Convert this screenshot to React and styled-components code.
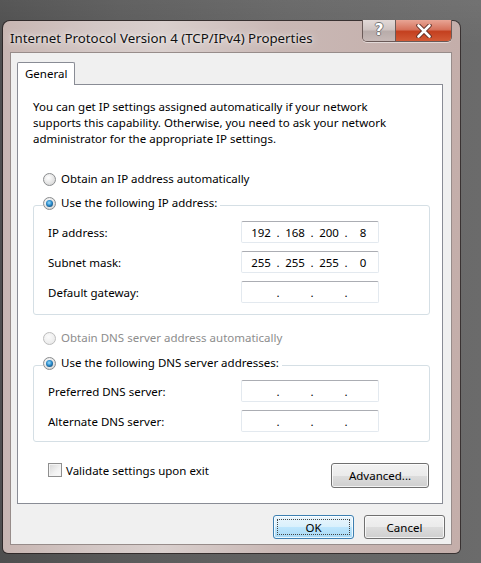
import styled, { createGlobalStyle } from "styled-components";

const GlobalStyle = createGlobalStyle`
  html, body {
    margin: 0;
    padding: 0;
  }
  body {
    width: 481px;
    height: 563px;
    overflow: hidden;
    background:
      linear-gradient(180deg, rgba(255,255,255,0.05) 0%, rgba(0,0,0,0) 8%),
      linear-gradient(90deg, #4e4e4e 0%, #5a5a5a 25%, #646464 60%, #6b6b6b 100%);
    font-family: "Noto Sans", "Open Sans", sans-serif;
    font-size: 11.5px;
    color: #000;
  }
`;

const Page = styled.div`
  display: flex;
  padding: 21px 0 0 3px;
`;

const Window = styled.div`
  box-sizing: border-box;
  width: 457px;
  height: 532px;
  display: flex;
  flex-direction: column;
  border-radius: 7px 7px 5px 5px;
  background: linear-gradient(90deg, #c8b6b2 0%, #d3c7c5 20%, #d9cfcd 35%, #c9b8b5 60%, #c4aeaa 100%);
  box-shadow: 0 0 0 1px rgba(30, 20, 20, 0.65);
`;

const TitleBar = styled.div`
  display: flex;
  align-items: flex-start;
  height: 31px;
  padding: 0 7px 0 7px;
`;

const Title = styled.div`
  flex: 1;
  padding-top: 8px;
  font-size: 13.3px;
  line-height: 18px;
  white-space: nowrap;
  color: #111;
  text-shadow: 0 0 8px rgba(255, 255, 255, 0.9), 0 0 3px rgba(255, 255, 255, 0.8);
`;

const CaptionButtons = styled.div`
  display: flex;
  margin-top: -1px;
  margin-right: 1px;
  border: 1px solid #6a5a58;
  border-top: none;
  border-radius: 0 0 5px 5px;
  overflow: hidden;
  box-shadow: 0 1px 0 rgba(255, 255, 255, 0.5);
`;

const CaptionButton = styled.div`
  display: flex;
  align-items: center;
  justify-content: center;
  height: 21px;
  width: ${(p) => p.$w}px;
  background: ${(p) =>
    p.$close
      ? "linear-gradient(180deg, #e8a595 0%, #d6735d 45%, #c4401f 55%, #d25a36 100%)"
      : "linear-gradient(180deg, #e2d9d7 0%, #cfc4c2 45%, #b8acaa 55%, #c6b9b7 100%)"};
  & + & {
    border-left: 1px solid #6a5a58;
  }
`;

const HelpGlyph = styled.span`
  font-family: "DejaVu Sans", sans-serif;
  font-weight: bold;
  font-size: 15px;
  line-height: 15px;
  color: #fff;
  text-shadow: 1px 0 0 #777, -1px 0 0 #777, 0 1px 0 #777, 0 -1px 0 #777;
`;

const Client = styled.div`
  box-sizing: border-box;
  flex: 1;
  display: flex;
  flex-direction: column;
  margin: 0 8px 8px 7px;
  padding: 9px 0 0 6px;
  background: #f0f0f0;
  border: 1px solid #978c8a;
`;

const TabStrip = styled.div`
  display: flex;
`;

const Tab = styled.div`
  box-sizing: border-box;
  height: 23px;
  padding: 0 7px;
  line-height: 21px;
  background: #fff;
  border: 1px solid #898c95;
  border-bottom: none;
  border-radius: 2px 2px 0 0;
  margin-bottom: -1px;
  position: relative;
  z-index: 1;
`;

const Panel = styled.div`
  box-sizing: border-box;
  width: 426px;
  height: 420px;
  background: #fff;
  border: 1px solid #898c95;
  display: flex;
  flex-direction: column;
`;

const Intro = styled.p`
  margin: 14px 0 0 15px;
  line-height: 16px;
  white-space: nowrap;
`;

const RadioRow = styled.label`
  display: flex;
  align-items: center;
  gap: 5px;
  height: 16px;
  line-height: 16px;
  margin: ${(p) => p.$m || "0"};
  color: ${(p) => (p.$disabled ? "#8d8d8d" : "#000")};
  white-space: nowrap;
`;

const Radio = styled.span`
  box-sizing: border-box;
  position: relative;
  width: 13px;
  height: 13px;
  border-radius: 50%;
  border: 1px solid ${(p) => (p.$disabled ? "#bcbcbc" : "#8a8c8e")};
  background: ${(p) =>
    p.$disabled
      ? "radial-gradient(circle at 40% 35%, #fbfbfb 0%, #ececec 70%, #e2e2e2 100%)"
      : "radial-gradient(circle at 40% 35%, #ffffff 0%, #e2e2e2 60%, #cfcfcf 100%)"};
  &::after {
    content: "";
    display: ${(p) => (p.$checked ? "block" : "none")};
    position: absolute;
    left: 2px;
    top: 2px;
    width: 7px;
    height: 7px;
    border-radius: 50%;
    background: radial-gradient(circle at 45% 40%, #9fe0ff 0%, #2b8ccc 45%, #0d4a78 80%, #10324d 100%);
  }
`;

const Group = styled.fieldset`
  box-sizing: border-box;
  margin: ${(p) => p.$m};
  margin-left: 15px;
  margin-right: 12px;
  padding: ${(p) => p.$pad};
  border: 1px solid #d5dfe5;
  border-radius: 3px;
  min-inline-size: 0;
`;

const Legend = styled.legend`
  padding: 0 3px 4px 0;
  margin-left: -5px;
  line-height: 16px;
`;

const FieldRow = styled.div`
  display: flex;
  align-items: center;
  height: 22px;
  & + & {
    margin-top: 8px;
  }
`;

const FieldLabel = styled.span`
  width: 193px;
  white-space: nowrap;
`;

const IpBox = styled.div`
  box-sizing: border-box;
  display: flex;
  align-items: center;
  width: 138px;
  height: 22px;
  padding-left: 5px;
  background: #fff;
  border: 1px solid #e3e9ef;
  border-top-color: #abadb3;
  border-radius: 2px;
`;

const Octet = styled.span`
  width: 28px;
  text-align: center;
`;

const Dot = styled.span`
  width: 6px;
  text-align: center;
`;

const BottomRow = styled.div`
  display: flex;
  align-items: flex-start;
  justify-content: space-between;
  margin: 21px 13px 0 30px;
`;

const CheckLabel = styled.label`
  display: flex;
  align-items: center;
  gap: 4px;
  height: 16px;
  margin-top: -1px;
  white-space: nowrap;
`;

const CheckBox = styled.span`
  box-sizing: border-box;
  width: 14px;
  height: 14px;
  border: 1px solid #8f8f8f;
  background: linear-gradient(135deg, #d6d6d6 0%, #f2f2f2 60%, #fafafa 100%);
  box-shadow: inset 0 0 0 1px #f4f4f4;
`;

const Button = styled.button`
  box-sizing: border-box;
  width: ${(p) => p.$w}px;
  height: ${(p) => p.$h || 24}px;
  font-family: inherit;
  font-size: 11.5px;
  color: #000;
  border-radius: 3px;
  border: 1px solid ${(p) => (p.$default ? "#3c7fb1" : "#707070")};
  background: ${(p) =>
    p.$default
      ? "linear-gradient(180deg, #eaf6fd 0%, #d9f0fc 50%, #bee6fd 50%, #a7d9f5 100%)"
      : "linear-gradient(180deg, #f2f2f2 0%, #ebebeb 50%, #dddddd 50%, #cfcfcf 100%)"};
  box-shadow: inset 0 0 0 1px rgba(255, 255, 255, 0.75);
  padding: 0;
  position: relative;
  &::after {
    content: "";
    display: ${(p) => (p.$default ? "block" : "none")};
    position: absolute;
    inset: 3px;
    border: 1px dotted #444;
  }
`;

const ButtonRow = styled.div`
  display: flex;
  justify-content: flex-end;
  gap: 10px;
  margin: 11px 6px 0 0;
`;

function IpField({ value }) {
  const parts = value ? value.split(".") : ["", "", "", ""];
  return (
    <IpBox>
      {parts.map((p, i) => (
        <span key={i} style={{ display: "contents" }}>
          <Octet>{p}</Octet>
          {i < 3 && <Dot>.</Dot>}
        </span>
      ))}
    </IpBox>
  );
}

function CloseIcon() {
  return (
    <svg width="16" height="14" viewBox="0 0 16 14">
      <path
        d="M2.5 1.5 L13.5 12.5 M13.5 1.5 L2.5 12.5"
        stroke="#5a2a22"
        strokeWidth="4.4"
        strokeLinecap="round"
        fill="none"
      />
      <path
        d="M2.5 1.5 L13.5 12.5 M13.5 1.5 L2.5 12.5"
        stroke="#fff"
        strokeWidth="2.6"
        strokeLinecap="round"
        fill="none"
      />
    </svg>
  );
}

export default function App() {
  return (
    <>
      <GlobalStyle />
      <Page>
        <Window>
          <TitleBar>
            <Title>Internet Protocol Version 4 (TCP/IPv4) Properties</Title>
            <CaptionButtons>
              <CaptionButton $w={32}>
                <HelpGlyph>?</HelpGlyph>
              </CaptionButton>
              <CaptionButton $w={55} $close>
                <CloseIcon />
              </CaptionButton>
            </CaptionButtons>
          </TitleBar>
          <Client>
            <TabStrip>
              <Tab>General</Tab>
            </TabStrip>
            <Panel>
              <Intro>
                You can get IP settings assigned automatically if your network
                <br />
                supports this capability. Otherwise, you need to ask your network
                <br />
                administrator for the appropriate IP settings.
              </Intro>

              <RadioRow $m="24px 0 0 25px">
                <Radio />
                Obtain an IP address automatically
              </RadioRow>

              <Group $m="8px 0 0 0" $pad="6px 10px 11px 14px">
                <Legend>
                  <RadioRow>
                    <Radio $checked />
                    Use the following IP address:
                  </RadioRow>
                </Legend>
                <FieldRow>
                  <FieldLabel>IP address:</FieldLabel>
                  <IpField value="192.168.200.8" />
                </FieldRow>
                <FieldRow>
                  <FieldLabel>Subnet mask:</FieldLabel>
                  <IpField value="255.255.255.0" />
                </FieldRow>
                <FieldRow>
                  <FieldLabel>Default gateway:</FieldLabel>
                  <IpField />
                </FieldRow>
              </Group>

              <RadioRow $m="15px 0 0 25px" $disabled>
                <Radio $disabled />
                Obtain DNS server address automatically
              </RadioRow>

              <Group $m="9px 0 0 0" $pad="5px 10px 9px 14px">
                <Legend>
                  <RadioRow>
                    <Radio $checked />
                    Use the following DNS server addresses:
                  </RadioRow>
                </Legend>
                <FieldRow>
                  <FieldLabel>Preferred DNS server:</FieldLabel>
                  <IpField />
                </FieldRow>
                <FieldRow>
                  <FieldLabel>Alternate DNS server:</FieldLabel>
                  <IpField />
                </FieldRow>
              </Group>

              <BottomRow>
                <CheckLabel>
                  <CheckBox />
                  Validate settings upon exit
                </CheckLabel>
                <Button $w={98} $h={25}>Advanced...</Button>
              </BottomRow>
            </Panel>
            <ButtonRow>
              <Button $w={81} $default>OK</Button>
              <Button $w={81}>Cancel</Button>
            </ButtonRow>
          </Client>
        </Window>
      </Page>
    </>
  );
}
